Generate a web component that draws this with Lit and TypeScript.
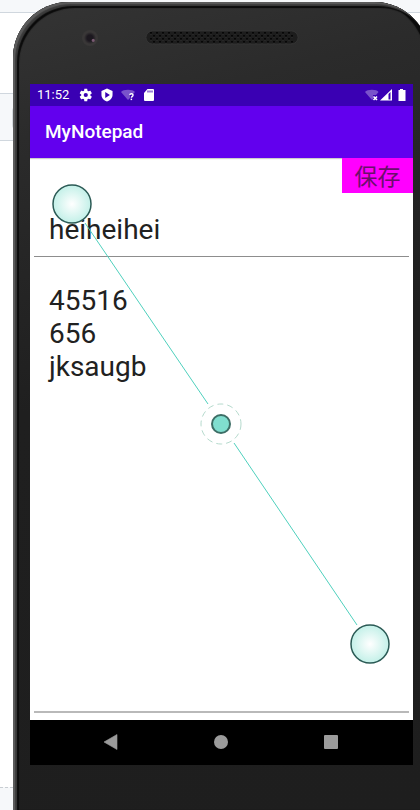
import { LitElement, html, css, svg } from "lit";
import { customElement, state } from "lit/decorators.js";

// Speaker grille: staggered rows of small holes
const holes: { x: number; y: number }[] = [];
for (let row = 0; row < 4; row++) {
  for (let col = 0; col < 24; col++) {
    holes.push({ x: 6 + col * 6 + (row % 2) * 3, y: 3 + row * 3 });
  }
}

@customElement("status-bar")
class StatusBar extends LitElement {
  static styles = css`
    :host {
      display: flex;
      align-items: center;
      height: 22px;
      padding: 0 7px;
      background: #3a00b3;
      color: #fff;
      font: 13px/22px Roboto, "Liberation Sans", sans-serif;
    }
    .icons {
      display: flex;
      align-items: center;
      gap: 7px;
      margin-left: 10px;
    }
    .icons.end {
      gap: 1px;
      margin-left: auto;
      margin-right: -3px;
    }
    svg {
      display: block;
      fill: #fff;
    }
  `;

  render() {
    return html`
      <span>11:52</span>
      <div class="icons">
        <svg width="14" height="14" viewBox="0 0 24 24" aria-hidden="true">
          <path fill-rule="evenodd" d="M19.4 13c.1-.3.1-.6.1-1s0-.7-.1-1l2.3-1.7c.2-.2.3-.4.1-.7l-2.2-3.8c-.1-.2-.4-.3-.6-.2l-2.7 1.1c-.6-.4-1.1-.8-1.8-1L14.1 1.8c0-.2-.2-.4-.5-.4h-4c-.3 0-.5.2-.5.4l-.4 2.9c-.7.2-1.3.6-1.8 1L4.2 4.6c-.2-.1-.5 0-.6.2L1.4 8.6c-.1.3-.1.5.1.7L3.9 11c-.1.3-.1.7-.1 1s0 .7.1 1l-2.4 1.7c-.2.2-.2.4-.1.7l2.2 3.8c.1.2.4.3.6.2l2.7-1.1c.6.4 1.2.8 1.8 1l.4 2.9c0 .2.2.4.5.4h4c.3 0 .5-.2.5-.4l.4-2.9c.7-.2 1.3-.6 1.8-1l2.7 1.1c.2.1.5 0 .6-.2l2.2-3.8c.2-.3.1-.5-.1-.7zM11.6 15.6a3.6 3.6 0 1 1 0-7.2 3.6 3.6 0 0 1 0 7.2z"/>
        </svg>
        <svg width="14" height="14" viewBox="0 0 24 24" aria-hidden="true">
          <path fill-rule="evenodd" d="M12 1L2.5 5v6.500c0 5.500 4 10.300 9.500 11.500 5.500-1.200 9.500-6 9.500-11.500V5zM9 7l8 5-8 5z"/>
        </svg>
        <svg width="14" height="14" viewBox="0 0 14 14" aria-hidden="true">
          <path opacity=".32" d="M0 4C2 1 12 1 14 4L12 6H9v4L7 12z"/>
          <path fill="none" stroke="#fff" stroke-width="1.4" d="M8.800 7c.2-1.800 3.400-1.700 3.200.2 0 1.200-1.600 1.100-1.600 2.500"/>
          <rect x="9.600" y="10.600" width="1.500" height="1.500"/>
        </svg>
        <svg width="14" height="14" viewBox="0 0 14 14" aria-hidden="true">
          <path fill-rule="evenodd" d="M5.500 1H11q1 0 1 1v10q0 1-1 1H3q-1 0-1-1V5zM5.500 2.500v2h1v-2zM7.500 2.500v2h1v-2zM9.500 2.500v2h1v-2z"/>
        </svg>
      </div>
      <div class="icons end">
        <svg width="14" height="14" viewBox="0 0 14 14" aria-hidden="true">
          <path opacity=".32" d="M0 4C2 1 12 1 13.500 4L11 7H8v4.500H6.500z"/>
          <path fill="none" stroke="#fff" stroke-width="1.600" d="M8.500 8.500l3.500 3.500M12 8.500l-3.500 3.500"/>
        </svg>
        <svg width="14" height="14" viewBox="0 0 14 14" aria-hidden="true">
          <path fill-rule="evenodd" d="M0 12.500L12 1v11.500zM8.500 6v5.500h2V4z"/>
        </svg>
        <svg width="14" height="14" viewBox="0 0 14 14" aria-hidden="true">
          <path d="M5 1h3v1h2.500v11h-7V2H5z"/>
        </svg>
      </div>
    `;
  }
}

@customElement("nav-bar")
class NavBar extends LitElement {
  static styles = css`
    :host {
      display: flex;
      align-items: center;
      justify-content: center;
      gap: 70px;
      height: 45px;
      padding: 0 2px 1px 0;
      box-sizing: border-box;
      background: #000;
    }
    button {
      width: 40px;
      height: 40px;
      padding: 0;
      border: 0;
      background: none;
      display: grid;
      place-items: center;
    }
    svg {
      fill: #9b9b9b;
    }
  `;

  render() {
    return html`
      <button aria-label="Back">
        <svg width="16" height="16" viewBox="0 0 16 16"><path d="M1 8L14 0.500V15.500z" stroke="#9b9b9b" stroke-linejoin="round" stroke-width=".6"/></svg>
      </button>
      <button aria-label="Home">
        <svg width="16" height="16" viewBox="0 0 16 16"><circle cx="8" cy="8" r="7"/></svg>
      </button>
      <button aria-label="Recent apps">
        <svg width="16" height="16" viewBox="0 0 16 16"><rect x="1" y="1" width="14" height="14" rx="1"/></svg>
      </button>
    `;
  }
}

@customElement("app-root")
class AppRoot extends LitElement {
  @state() private noteTitle = "heiheihei";
  @state() private noteBody = "45516\n656\njksaugb";

  static styles = css`
    :host {
      display: grid;
      grid-template: minmax(0, 1fr) / minmax(0, 1fr);
      height: 100vh;
      overflow: hidden;
      background: #fff;
      font-family: Roboto, "Noto Sans CJK SC", sans-serif;
    }
    * {
      box-sizing: border-box;
    }
    .backdrop,
    .phone {
      grid-area: 1 / 1;
    }
    .backdrop {
      display: flex;
      flex-direction: column;
    }
    .strip {
      background: #f6f8fa;
      border-bottom: 1px solid #d0d7de;
      height: 13px;
    }
    .row {
      height: 48px;
      margin-top: 80px;
      padding: 13px 12px;
      background: #f6f8fa;
      border: 1px solid #d0d7de;
      border-width: 1px 0;
    }
    .chip {
      display: block;
      width: 20px;
      height: 22px;
      border-radius: 4px;
      background: #d5dade;
    }
    .foot {
      height: 23px;
      margin-top: auto;
      background: #f6f8fa;
      border-top: 1px dashed #c8cdd2;
    }
    .phone {
      display: flex;
      flex-direction: column;
      margin: 2px -10px 0 13px;
      padding: 0 17px 45px;
      border-radius: 56px 56px 0 0;
      background: linear-gradient(165deg, #343434 0%, #2b2b2b 15%, #1f1f1f 45%, #1e1e1e 100%);
      box-shadow: inset 2px 2px 1px #5c5c5c, inset 4px 4px 1px #3c3c3c, inset 6px 6px 1px #0b0b0b,
        inset -5px 0 1px #0b0b0b;
    }
    .bezel {
      flex: none;
      display: grid;
      grid-template-columns: 1fr auto 1fr;
      height: 82px;
      padding-top: 28px;
      align-items: start;
    }
    .camera {
      width: 16px;
      height: 16px;
      margin-left: 52px;
      border-radius: 50%;
      background: radial-gradient(circle at 70% 65%, #7a5a72 0 1px, transparent 2px),
        radial-gradient(circle at 50% 50%, #1c181f 0 3px, #393737 6px 8px);
    }
    .grille {
      display: block;
    }
    .screen {
      position: relative;
      flex: 1;
      min-height: 0;
      display: flex;
      flex-direction: column;
      background: #fff;
    }
    .appbar {
      flex: none;
      margin: 0;
      padding: 0 15px;
      background: #6200ee;
      color: #fff;
      font-size: 19px;
      font-weight: 500;
      line-height: 52px;
      box-shadow: 0 1px 1px rgba(0, 0, 0, 0.2);
    }
    .save {
      align-self: flex-end;
      flex: none;
      width: 71px;
      height: 35px;
      padding: 0;
      border: 0;
      background: #f0f;
      color: #6b0f6b;
      font: 400 23px/35px "Noto Sans CJK SC", sans-serif;
    }
    .field {
      margin: 0 4px;
      padding: 0 15px;
      border: 0;
      border-bottom: 1px solid #8d8d8d;
      border-radius: 0;
      outline: 0;
      background: none;
      color: #212121;
      font: 28px/33px Roboto, "Noto Sans CJK SC", sans-serif;
    }
    .title {
      flex: none;
      height: 64px;
      padding-top: 9px;
    }
    .body {
      flex: 1;
      min-height: 0;
      margin-bottom: 7px;
      padding-top: 27px;
      border-bottom: 2px solid #b9b9b9;
      resize: none;
    }
    .gesture {
      position: absolute;
      inset: 0;
      width: 100%;
      height: 100%;
      pointer-events: none;
    }
    .path {
      stroke: #4fd0bd;
      stroke-width: 1;
    }
    .handle {
      fill: url(#glow);
      stroke: #2b5a55;
      stroke-width: 1.5;
    }
    .ring {
      fill: #fff;
      stroke: #b5dacd;
      stroke-dasharray: 6 4;
    }
    .middle {
      fill: #80decf;
      stroke: #3d6e66;
      stroke-width: 2;
    }
  `;

  render() {
    return html`
      <div class="backdrop">
        <div class="strip"></div>
        <div class="row"><span class="chip"></span></div>
        <div class="foot"></div>
      </div>
      <div class="phone">
        <div class="bezel">
          <span class="camera"></span>
          <svg class="grille" width="154" height="15" viewBox="0 0 154 15" aria-hidden="true">
            <rect x="1" y="1" width="152" height="13" rx="6.5" fill="#1d1d1d" stroke="#3a3a3a" stroke-width=".6" />
            ${holes.map((h) => svg`<circle cx=${h.x} cy=${h.y} r="1" fill="#000" /><circle cx=${h.x} cy=${h.y + 1} r=".5" fill="#4a4a4a" />`)}
          </svg>
        </div>
        <main class="screen">
          <status-bar></status-bar>
          <h1 class="appbar">MyNotepad</h1>
          <button class="save">保存</button>
          <input
            class="field title"
            aria-label="Title"
            .value=${this.noteTitle}
            @input=${(e: Event) => (this.noteTitle = (e.target as HTMLInputElement).value)}
          />
          <textarea
            class="field body"
            aria-label="Note"
            spellcheck="false"
            .value=${this.noteBody}
            @input=${(e: Event) => (this.noteBody = (e.target as HTMLTextAreaElement).value)}
          ></textarea>
          <nav-bar></nav-bar>
          <svg class="gesture" viewBox="0 0 383 681" aria-hidden="true">
            <defs>
              <radialGradient id="glow">
                <stop offset="0" stop-color="#fff" />
                <stop offset="1" stop-color="#c3f0e8" />
              </radialGradient>
            </defs>
            <path class="path" d="M55 139L178 320M204 359L327 541" />
            <circle class="handle" cx="42" cy="120" r="19" />
            <circle class="handle" cx="340" cy="560" r="19" />
            <circle class="ring" cx="191" cy="340" r="20" />
            <circle class="middle" cx="191" cy="340" r="9" />
          </svg>
        </main>
      </div>
    `;
  }
}
